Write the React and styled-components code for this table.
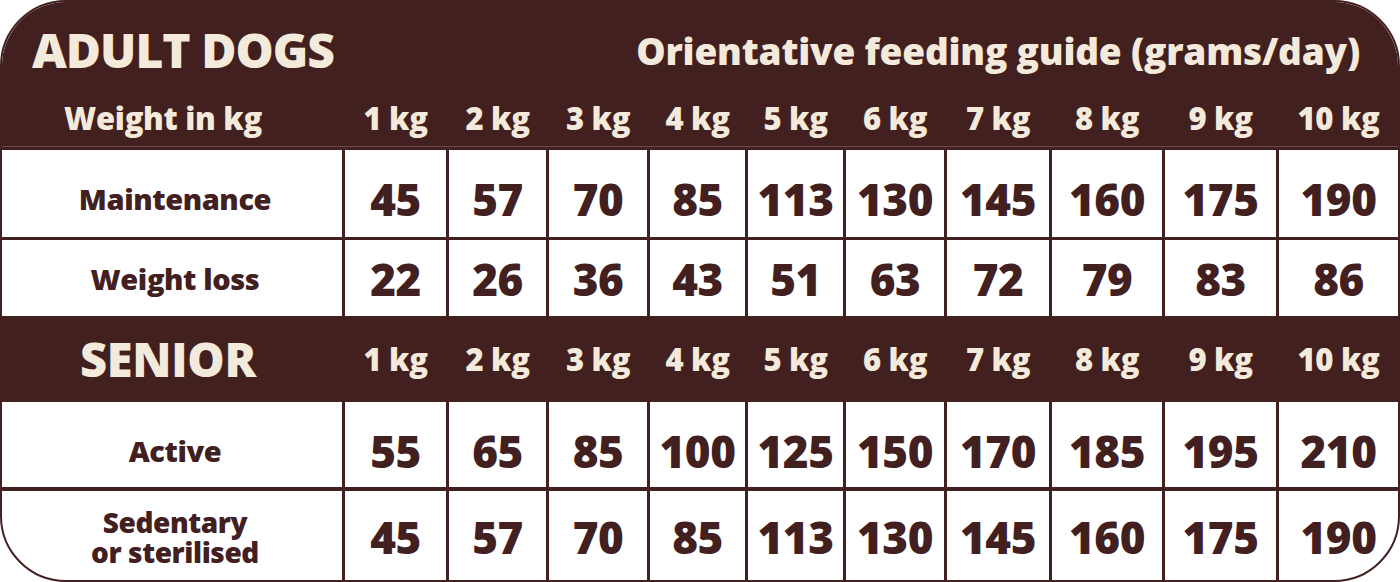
import React from "react";
import styled, { createGlobalStyle } from "styled-components";

const DARK = "#42201f";
const CREAM = "#f4eadc";
const COLS = "340px 104px 100px 101px 98px 98px 101px 105px 113px 114px 1fr";

const weights = ["1 kg", "2 kg", "3 kg", "4 kg", "5 kg", "6 kg", "7 kg", "8 kg", "9 kg", "10 kg"];

const adult = [
  { label: "Maintenance", values: [45, 57, 70, 85, 113, 130, 145, 160, 175, 190], height: 87, line: 3, shift: 10 },
  { label: "Weight loss", values: [22, 26, 36, 43, 51, 63, 72, 79, 83, 86], height: 76, line: 3, shift: 1 },
];

const senior = [
  { label: "Active", values: [55, 65, 85, 100, 125, 150, 170, 185, 195, 210], height: 85, line: 0, shift: 12 },
  { label: ["Sedentary", "or sterilised"], values: [45, 57, 70, 85, 113, 130, 145, 160, 175, 190], height: 89, line: 4, shift: 3 },
];

export default function App() {
  return (
    <>
      <GlobalStyle />
      <Card>
        <HeaderBand>
          <TitleRow>
            <Title>ADULT DOGS</Title>
            <Subtitle>Orientative feeding guide (grams/day)</Subtitle>
          </TitleRow>
          <HeadRow $height={57}>
            <HeadLabel $size={31}>Weight in kg</HeadLabel>
            {weights.map((w) => (
              <HeadCell key={w}>{w}</HeadCell>
            ))}
          </HeadRow>
        </HeaderBand>
        {adult.map((row) => (
          <DataRow key={row.label} $height={row.height} $line={row.line}>
            <RowLabel $shift={row.shift}>{row.label}</RowLabel>
            {row.values.map((v, i) => (
              <Value key={i} $shift={row.shift}>{v}</Value>
            ))}
          </DataRow>
        ))}
        <SeniorBand>
          <HeadRow $height={86}>
            <HeadLabel $size={47}>SENIOR</HeadLabel>
            {weights.map((w) => (
              <HeadCell key={w}>{w}</HeadCell>
            ))}
          </HeadRow>
        </SeniorBand>
        {senior.map((row, r) => (
          <DataRow key={r} $height={row.height} $line={row.line}>
            <RowLabel $shift={row.shift}>
              {Array.isArray(row.label)
                ? row.label.map((l) => <LabelLine key={l}>{l}</LabelLine>)
                : row.label}
            </RowLabel>
            {row.values.map((v, i) => (
              <Value key={i} $shift={row.shift}>{v}</Value>
            ))}
          </DataRow>
        ))}
      </Card>
    </>
  );
}

const GlobalStyle = createGlobalStyle`
  html, body {
    margin: 0;
    padding: 0;
    background: #ffffff;
  }
  * {
    box-sizing: border-box;
  }
`;

const Card = styled.div`
  width: 1400px;
  height: 582px;
  border: 2px solid ${DARK};
  border-radius: 66px;
  overflow: hidden;
  background: #ffffff;
  font-family: "Open Sans", "Liberation Sans", sans-serif;
  font-weight: 800;
  color: ${DARK};
`;

const HeaderBand = styled.div`
  background: ${DARK};
  height: 145px;
  border-bottom: 1px solid #6a4b49;
  display: flex;
  flex-direction: column;
`;

const TitleRow = styled.div`
  height: 88px;
  display: flex;
  align-items: baseline;
  justify-content: space-between;
  padding: 15px 38px 0 30px;
  color: ${CREAM};
`;

const Title = styled.div`
  font-size: 48px;
  letter-spacing: -1px;
`;

const Subtitle = styled.div`
  font-size: 37px;
  letter-spacing: -0.2px;
  position: relative;
  top: -3px;
`;

const HeadRow = styled.div`
  display: grid;
  grid-template-columns: ${COLS};
  height: ${(p) => p.$height}px;
  align-items: center;
  color: ${CREAM};
`;

const HeadLabel = styled.div`
  text-align: center;
  font-size: ${(p) => p.$size}px;
  letter-spacing: -0.3px;
  padding-right: ${(p) => (p.$size > 40 ? 8 : 18)}px;
`;

const HeadCell = styled.div`
  text-align: center;
  font-size: 31px;
  letter-spacing: -0.3px;
  padding-left: 3px;
  white-space: nowrap;
`;

const SeniorBand = styled.div`
  background: ${DARK};
`;

const DataRow = styled.div`
  display: grid;
  grid-template-columns: ${COLS};
  height: ${(p) => p.$height + p.$line}px;
  border-top: ${(p) => p.$line}px solid ${DARK};
`;

const RowLabel = styled.div`
  display: flex;
  flex-direction: column;
  align-items: center;
  justify-content: center;
  font-size: 29px;
  line-height: 31px;
  letter-spacing: -0.4px;
  padding: ${(p) => p.$shift}px 0 0 6px;
`;

const LabelLine = styled.span`
  display: block;
  font-size: 28px;
  line-height: 30px;
`;

const Value = styled.div`
  display: flex;
  align-items: center;
  justify-content: center;
  border-left: 3px solid ${DARK};
  font-size: 44px;
  letter-spacing: -0.5px;
  padding-top: ${(p) => p.$shift}px;
`;
